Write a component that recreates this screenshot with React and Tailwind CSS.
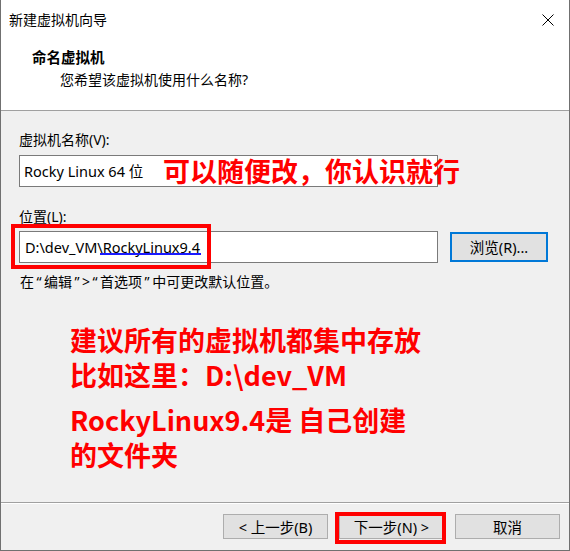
const ui = "font-['Noto_Sans','Noto_Sans_CJK_SC',sans-serif]";
const mark = "font-['Noto_Sans_CJK_SC','Noto_Sans',sans-serif] font-bold text-[#ff0000] text-[27px]";

function Button({ children, className = "" }) {
  return (
    <div
      className={`w-[105px] h-[25px] flex items-center justify-center bg-[#e1e1e1] border border-[#adadad] text-[14.5px] text-black ${className}`}
    >
      {children}
    </div>
  );
}

// windows draws these quotes wider than Noto Sans does
function Q({ children }) {
  return <span className="px-[2.5px]">{children}</span>;
}

export default function App() {
  return (
    <div
      className={`w-[570px] h-[551px] flex flex-col bg-[#f0f0f0] border-l border-r border-b border-[#707070] ${ui} leading-[20px] text-black overflow-hidden`}
    >
      {/* title + header */}
      <div className="h-[111px] shrink-0 bg-white border-b border-[#a0a0a0]">
        <div className="flex justify-between items-center pl-[8px] pr-[15px] pt-[10px]">
          <span className="text-[14px]">新建虚拟机向导</span>
          <svg width="12" height="12" viewBox="0 0 12 12">
            <path d="M0.5 0.5 L11.5 11.5 M11.5 0.5 L0.5 11.5" stroke="#000" strokeWidth="1" />
          </svg>
        </div>
        <div className="pl-[31px] pt-[17px] text-[14.5px] font-bold">命名虚拟机</div>
        <div className="pl-[59px] pt-[3px] text-[14px]">您希望该虚拟机使用什么名称?</div>
      </div>

      {/* body */}
      <div className="flex-1 px-[18px] pt-[19px] text-[14px]">
        <div>虚拟机名称(V):</div>
        <div className="relative mt-[5px] w-[419px] h-[32px] bg-white border border-[#7a7a7a] flex items-center pl-[4px] text-[14.5px]">
          Rocky Linux 64 位
          <span className={`absolute left-[143px] top-[0px] leading-[30px] whitespace-nowrap ${mark}`}>
            可以随便改，你认识就行
          </span>
        </div>

        <div className="mt-[20px]">位置(L):</div>
        <div className="mt-[4px] flex items-center gap-[12px]">
          <div className="relative w-[419px] h-[32px] bg-white border border-[#7a7a7a] flex items-center pl-[5px] text-[14.5px]">
            D:\dev_VM\RockyLinux9.4
            <div className="absolute left-[80px] top-[21px] w-[101px] h-[2px] bg-[#1a1aff]" />
            <div className="absolute left-[-9px] top-[-8px] w-[200px] h-[45px] border-[4px] border-[#ff0000]" />
          </div>
          <div className="w-[98px] h-[30px] flex items-center justify-center bg-[#e1e1e1] border-2 border-[#0078d7] text-[14.5px]">
            浏览(R)...
          </div>
        </div>
        <div className="mt-[9px] pl-[1px]">
          在<Q>“</Q>编辑<Q>”</Q>&gt;<Q>“</Q>首选项<Q>”</Q>中可更改默认位置。
        </div>

        <div className={`mt-[30px] pl-[51px] leading-[35px] ${mark}`}>
          <p>建议所有的虚拟机都集中存放</p>
          <p>比如这里：D:\dev_VM</p>
          <p className="mt-[10px]">RockyLinux9.4是 自己创建</p>
          <p>的文件夹</p>
        </div>
      </div>

      {/* footer */}
      <div className="h-[48px] shrink-0 border-t border-[#a0a0a0]">
        <div className="h-full border-t border-white flex justify-end items-start gap-[11px] pr-[9px] pt-[10px]">
          <Button>&lt; 上一步(B)</Button>
          <div className="relative">
            <Button>下一步(N) &gt;</Button>
            <div className="absolute left-[-4px] top-[-2px] w-[111px] h-[32px] border-[4px] border-[#ff0000]" />
          </div>
          <Button>取消</Button>
        </div>
      </div>
    </div>
  );
}
